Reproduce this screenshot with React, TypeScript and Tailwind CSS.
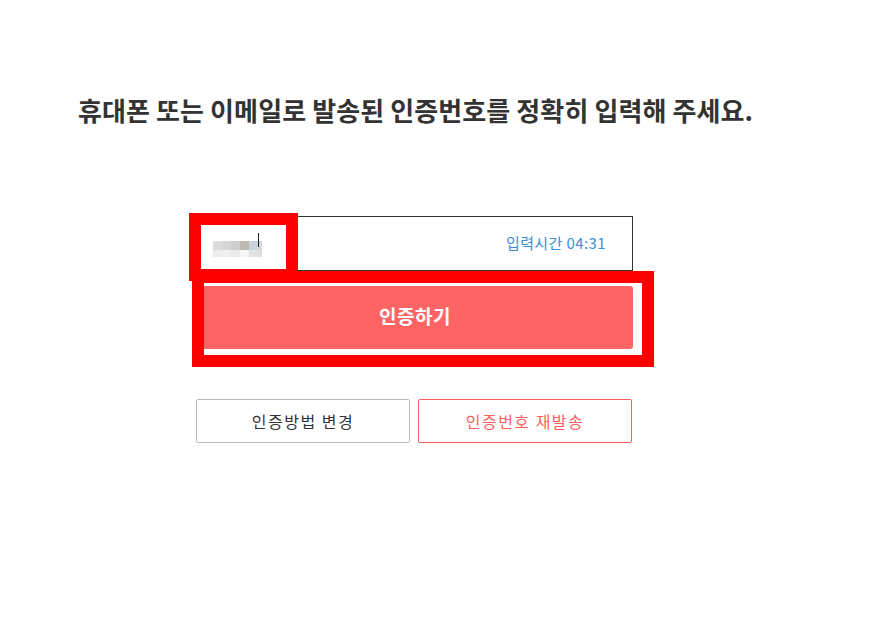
import React from "react";

const font = { fontFamily: '"Noto Sans CJK KR", "Noto Sans", sans-serif' };

export default function App() {
  return (
    <div className="relative w-[877px] h-[617px] bg-white text-[#333]" style={font}>
      <div className="pt-[92px] pl-[78px]">
        <h1 className="text-[26px] font-bold leading-[36px] tracking-[0.1px] text-[#333]">
          휴대폰 또는 이메일로 발송된 인증번호를 정확히 입력해 주세요.
        </h1>
        <div className="ml-[119px] mt-[88px] w-[436px]">
          <div className="h-[55px] border border-[#333] flex items-center justify-between pl-[15px] pr-[26px]">
            <div className="flex items-center">
              <div className="flex flex-col mt-[11px]">
                <div className="flex h-[9px]">
                  <div className="w-[9px] bg-[#dcdcdc]" />
                  <div className="w-[9px] bg-[#d6d6d6]" />
                  <div className="w-[9px] bg-[#cfcfcf]" />
                  <div className="w-[9px] bg-[#bcb7b1]" />
                  <div className="w-[9px] bg-[#cad2dc]" />
                  <div className="w-[4px] bg-[#d8d8d8]" />
                </div>
                <div className="flex h-[7px]">
                  <div className="w-[9px] bg-[#ececec]" />
                  <div className="w-[9px] bg-[#efefef]" />
                  <div className="w-[9px] bg-[#ebebeb]" />
                  <div className="w-[9px] bg-[#f6f6f6]" />
                  <div className="w-[9px] bg-[#e3e3e3]" />
                  <div className="w-[4px] bg-[#dfdfdf]" />
                </div>
              </div>
              <div className="w-px h-[14px] bg-[#222] -ml-[4px] -mt-[8px]" />
            </div>
            <span className="text-[15px] tracking-[0.4px] text-[#3b8fd6]">입력시간 04:31</span>
          </div>
          <button className="mt-[15px] w-full h-[63px] rounded-[3px] bg-[#ff6464] text-white text-[19px] tracking-[0.5px] font-bold flex items-center justify-center pb-[2px]">
            인증하기
          </button>
          <div className="mt-[50px] flex gap-[8px] -ml-px">
            <button className="w-[214px] h-[44px] border border-[#bbbbbb] rounded-[2px] text-[16px] tracking-[1.5px] text-[#333] flex items-center justify-center">
              인증방법 변경
            </button>
            <button className="w-[214px] h-[44px] border border-[#ff5f5f] rounded-[2px] text-[16px] tracking-[1.5px] text-[#ff5f5f] flex items-center justify-center">
              인증번호 재발송
            </button>
          </div>
        </div>
      </div>
      <div className="absolute left-[189px] top-[213px] w-[109px] h-[68px] border-[12px] border-[#ff0000]" />
      <div className="absolute left-[192px] top-[271px] w-[462px] h-[96px] border-[12px] border-[#ff0000]" />
    </div>
  );
}
